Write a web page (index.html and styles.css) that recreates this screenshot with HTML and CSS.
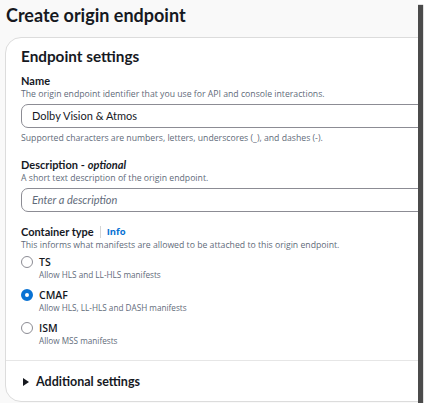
FILE: index.html
```html
<!DOCTYPE html>
<html>
<head>
<meta charset="utf-8">
<link rel="stylesheet" href="styles.css">
</head>
<body>
<div class="shot">
  <h1 class="title">Create origin endpoint</h1>
  <section class="card">
    <div class="card-body">
      <h2 class="card-title">Endpoint settings</h2>
      <div class="field">
        <div class="label">Name</div>
        <div class="desc">The origin endpoint identifier that you use for API and console interactions.</div>
        <div class="input">Dolby Vision &amp; Atmos</div>
        <div class="hint">Supported characters are numbers, letters, underscores (_), and dashes (-).</div>
      </div>
      <div class="field">
        <div class="label">Description - <i>optional</i></div>
        <div class="desc">A short text description of the origin endpoint.</div>
        <div class="input placeholder">Enter a description</div>
      </div>
      <div class="field">
        <div class="label">Container type<span class="sep"></span><span class="info">Info</span></div>
        <div class="desc">This informs what manifests are allowed to be attached to this origin endpoint.</div>
        <div class="radios">
          <div class="radio">
            <span class="dot"></span>
            <div><div class="r-label">TS</div><div class="r-desc">Allow HLS and LL-HLS manifests</div></div>
          </div>
          <div class="radio">
            <span class="dot on"></span>
            <div><div class="r-label">CMAF</div><div class="r-desc">Allow HLS, LL-HLS and DASH manifests</div></div>
          </div>
          <div class="radio">
            <span class="dot"></span>
            <div><div class="r-label">ISM</div><div class="r-desc">Allow MSS manifests</div></div>
          </div>
        </div>
      </div>
    </div>
    <div class="expander"><span class="caret"></span>Additional settings</div>
  </section>
</div>
</body>
</html>
```

FILE: styles.css
```css
html, body {
  margin: 0;
  padding: 0;
  background: #ffffff;
}
body {
  font-family: "Open Sans", "Noto Sans", sans-serif;
  color: #16191f;
}
.shot {
  width: 418px;
  height: 403px;
  overflow: hidden;
  background: #f9f9f9;
  box-shadow: 5px 5px 1px rgba(55, 55, 55, 0.9);
}
.title {
  margin: 0;
  padding: 3px 0 0 6px;
  height: 37px;
  box-sizing: border-box;
  font-family: Lato, "Open Sans", sans-serif;
  font-size: 18px;
  font-weight: 700;
  line-height: 24px;
}
.card {
  margin-left: 5px;
  width: 640px;
  height: 365px;
  background: #fff;
  border: 1px solid #dcdcdc;
  border-radius: 16px;
  box-sizing: border-box;
}
.card-body {
  padding: 7px 0 0 15px;
  height: 323px;
  box-sizing: border-box;
  border-bottom: 1px solid #e6e6e6;
}
.card-title {
  margin: 0 0 6px;
  font-family: Lato, "Open Sans", sans-serif;
  font-size: 15.3px;
  font-weight: 700;
  line-height: 22px;
}
.field { margin-bottom: 12px; }
.label {
  font-family: Lato, "Open Sans", sans-serif;
  font-size: 11px;
  font-weight: 700;
  line-height: 15px;
  display: flex;
  align-items: center;
}
.label i { font-weight: 700; margin-left: 3px; }
.sep {
  display: inline-block;
  width: 1px;
  height: 12px;
  background: #d5d5d5;
  margin: 0 6px 0 6px;
}
.info {
  color: #0972d3;
  font-family: "Open Sans", sans-serif;
  font-size: 9.5px;
  font-weight: 700;
}
.desc, .hint {
  font-size: 8.7px;
  line-height: 13px;
  color: #5f6b7a;
}
.hint { margin-top: 4px; }
.input {
  margin-top: 3px;
  height: 24px;
  border: 1px solid #8c8c94;
  border-radius: 7px 0 0 7px;
  box-sizing: border-box;
  padding-left: 10px;
  font-family: Lato, "Open Sans", sans-serif;
  font-size: 11px;
  line-height: 22px;
}
.placeholder {
  font-style: italic;
  color: #5f6b7a;
}
.radios { margin-top: 3px; }
.radio {
  display: flex;
  align-items: flex-start;
  gap: 6px;
  margin-bottom: 7px;
}
.dot {
  width: 12px;
  height: 12px;
  border: 1px solid #8c8c94;
  border-radius: 50%;
  box-sizing: border-box;
  margin-top: 1px;
  flex: none;
}
.dot.on {
  border: 4px solid #0972d3;
}
.r-label {
  font-size: 10.5px;
  font-weight: 600;
  line-height: 14px;
}
.r-desc {
  font-size: 8.2px;
  line-height: 12px;
  color: #5f6b7a;
}
.expander {
  padding: 12px 0 0 17px;
  font-family: Lato, "Open Sans", sans-serif;
  font-size: 12.5px;
  font-weight: 700;
  line-height: 17px;
  display: flex;
  align-items: center;
}
.caret {
  width: 0;
  height: 0;
  border-left: 6px solid #16191f;
  border-top: 4px solid transparent;
  border-bottom: 4px solid transparent;
  margin-right: 7px;
}
```
